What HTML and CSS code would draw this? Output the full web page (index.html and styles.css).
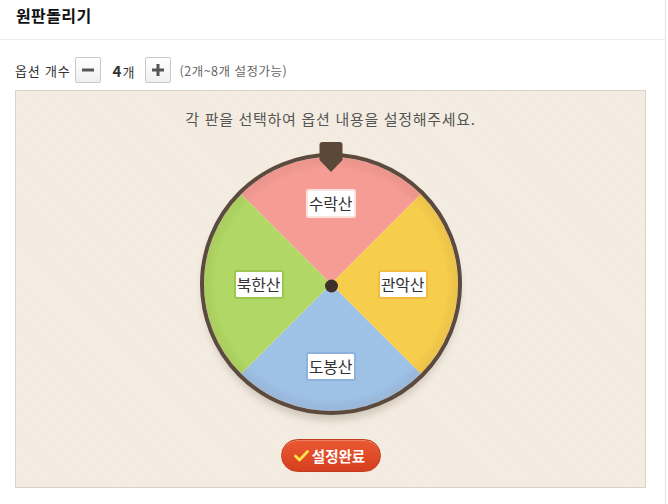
FILE: index.html
```html
<!DOCTYPE html>
<html lang="ko">
<head>
<meta charset="utf-8">
<title>원판돌리기</title>
<link rel="stylesheet" href="styles.css">
</head>
<body>
<div class="page">
  <div class="header"><h1 class="title">원판돌리기</h1></div>
  <div class="options">
    <span class="opt-label">옵션 개수</span>
    <button class="step-btn" type="button" aria-label="빼기">
      <svg width="12" height="12" viewBox="0 0 12 12"><rect x="0" y="4.5" width="12" height="3" fill="#555"/></svg>
    </button>
    <span class="count"><b>4</b>개</span>
    <button class="step-btn" type="button" aria-label="더하기">
      <svg width="12" height="12" viewBox="0 0 12 12"><rect x="0" y="4.5" width="12" height="3" fill="#555"/><rect x="4.5" y="0" width="3" height="12" fill="#555"/></svg>
    </button>
    <span class="hint">(2개~8개 설정가능)</span>
  </div>
  <div class="panel">
    <p class="guide">각 판을 선택하여 옵션 내용을 설정해주세요.</p>
    <div class="wheel">
      <svg class="wheel-svg" width="270" height="290" viewBox="0 0 270 290">
        <defs>
          <radialGradient id="rim" cx="135" cy="142" r="128" gradientUnits="userSpaceOnUse">
            <stop offset="0.9" stop-color="#000" stop-opacity="0"/>
            <stop offset="1" stop-color="#7a3a20" stop-opacity="0.08"/>
          </radialGradient>
          <filter id="blur" x="-20%" y="-20%" width="140%" height="140%"><feGaussianBlur stdDeviation="4"/></filter>
        </defs>
        <ellipse cx="135" cy="148" rx="128" ry="130" fill="#6b5a4a" opacity="0.28" filter="url(#blur)"/>
        <circle cx="135" cy="142" r="129" fill="#fff"/>
        <path d="M135 142 L45.2 52.2 A127 127 0 0 1 224.8 52.2 Z" fill="#f59c94"/>
        <path d="M135 142 L224.8 52.2 A127 127 0 0 1 224.8 231.8 Z" fill="#f7cd4c"/>
        <path d="M135 142 L224.8 231.8 A127 127 0 0 1 45.2 231.8 Z" fill="#9ec1e6"/>
        <path d="M135 142 L45.2 231.8 A127 127 0 0 1 45.2 52.2 Z" fill="#b1d864"/>
        <circle cx="135" cy="142" r="127" fill="url(#rim)"/>
        <circle cx="135" cy="142" r="129" fill="none" stroke="#5b4a3d" stroke-width="4"/>
        <path d="M123.5 3 Q123.5 0 126.5 0 L143.5 0 Q146.5 0 146.5 3 L146.5 18 L135 30 L123.5 18 Z" fill="#5c4838"/>
        <circle cx="135.5" cy="144" r="6.5" fill="#3e3028"/>
      </svg>
      <span class="slice-label lb-top">수락산</span>
      <span class="slice-label lb-right">관악산</span>
      <span class="slice-label lb-bottom">도봉산</span>
      <span class="slice-label lb-left">북한산</span>
    </div>
    <button class="done-btn" type="button">
      <svg width="15" height="12" viewBox="0 0 15 12"><path d="M1.5 6 L5.5 10 L13.5 1.5" fill="none" stroke="#ffe14a" stroke-width="2.8" stroke-linecap="round" stroke-linejoin="round"/></svg>
      <span>설정완료</span>
    </button>
  </div>
</div>
</body>
</html>
```

FILE: styles.css
```css
* { box-sizing: border-box; }

html, body {
  margin: 0;
  padding: 0;
  background: #fff;
}

body {
  font-family: "Noto Sans CJK KR", "Noto Sans", sans-serif;
  color: #333;
}

.page {
  width: 666px;
  height: 504px;
  border-right: 1px solid #e4e4e4;
}

.header {
  height: 40px;
  border-bottom: 1px solid #ececec;
  padding: 4px 0 0 16px;
}

.title {
  margin: 0;
  font-size: 16px;
  line-height: 22px;
  font-weight: bold;
  letter-spacing: 0.4px;
  color: #111;
}

.options {
  display: flex;
  align-items: center;
  height: 26px;
  margin-top: 17px;
  padding-left: 15px;
}

.opt-label {
  font-size: 13px;
  letter-spacing: 0.8px;
  color: #333;
  margin-right: 5px;
}

.step-btn {
  width: 26px;
  height: 26px;
  padding: 0;
  margin: 0;
  border: 1px solid #c9c9c9;
  border-radius: 2px;
  background: linear-gradient(#ffffff, #efefef);
  display: flex;
  align-items: center;
  justify-content: center;
}

.count {
  font-size: 13px;
  color: #333;
  margin: 0 11px;
  width: 22px;
  text-align: center;
}

.count b {
  font-size: 15px;
  margin-right: 1px;
}

.hint {
  font-size: 12.5px;
  letter-spacing: 0.5px;
  color: #666;
  margin-left: 8px;
}

.panel {
  margin: 7px 0 0 15px;
  width: 631px;
  height: 398px;
  border: 1px solid #ddd3c4;
  background-color: #f3ebe0;
  background-image: repeating-linear-gradient(45deg, rgba(255,255,255,0.08) 0 1px, transparent 1px 2px);
  display: flex;
  flex-direction: column;
  align-items: center;
  padding-top: 18px;
}

.guide {
  margin: 0;
  font-size: 15px;
  line-height: 20px;
  letter-spacing: 0.7px;
  color: #555;
}

.wheel {
  position: relative;
  width: 270px;
  height: 290px;
  margin-top: 13px;
}

.wheel-svg {
  display: block;
}

.slice-label {
  position: absolute;
  width: 50px;
  height: 29px;
  background: #fff;
  border: 2px solid #fff;
  border-radius: 3px;
  font-size: 16px;
  line-height: 25px;
  text-align: center;
  color: #333;
  letter-spacing: -0.3px;
}

.lb-top { left: 110px; top: 47px; border-color: #fbe3e0; }
.lb-right { left: 182px; top: 128px; border-color: #f2bb42; }
.lb-bottom { left: 110px; top: 210px; border-color: #8db2dc; }
.lb-left { left: 38px; top: 128px; border-color: #9cc552; }

.done-btn {
  margin-top: 7px;
  width: 100px;
  height: 33px;
  border: 1px solid #c23b1c;
  border-radius: 17px;
  background: linear-gradient(#ea5932, #d63f1f);
  box-shadow: inset 0 1px 0 rgba(255,255,255,0.25);
  display: flex;
  align-items: center;
  justify-content: center;
  gap: 3px;
  padding: 0 2px 0 0;
  font-family: "Noto Sans CJK KR", "Noto Sans", sans-serif;
  font-size: 14.5px;
  font-weight: bold;
  color: #fff;
}
```
